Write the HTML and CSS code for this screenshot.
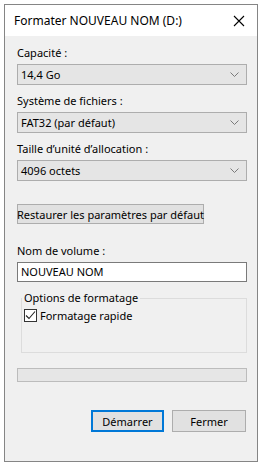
FILE: index.html
```html
<!DOCTYPE html>
<html lang="fr">

<head>
    <meta charset="UTF-8">
    <meta name="viewport" content="width=device-width, initial-scale=1.0">
    <title>Formater</title>
    <link rel="stylesheet" href="styles.css">
</head>

<body>
    <div class="window">
        <div class="titlebar">
            <span class="title">Formater NOUVEAU NOM (D:)</span>
            <svg class="close" width="12" height="12" viewBox="0 0 12 12">
                <path d="M1 1 L11 11 M11 1 L1 11" stroke="#000" stroke-width="1.1" fill="none" />
            </svg>
        </div>

        <div class="content">
            <div class="field first">
                <div class="label">Capacité :</div>
                <div class="combo"><span>14,4 Go</span><svg class="chev" width="9" height="5" viewBox="0 0 9 5"><path d="M0.5 0.5 L4.5 4.5 L8.5 0.5" stroke="#7a7a7a" fill="none" /></svg></div>
            </div>
            <div class="field">
                <div class="label">Système de fichiers :</div>
                <div class="combo"><span>FAT32 (par défaut)</span><svg class="chev" width="9" height="5" viewBox="0 0 9 5"><path d="M0.5 0.5 L4.5 4.5 L8.5 0.5" stroke="#7a7a7a" fill="none" /></svg></div>
            </div>
            <div class="field">
                <div class="label">Taille d’unité d’allocation :</div>
                <div class="combo"><span>4096 octets</span><svg class="chev" width="9" height="5" viewBox="0 0 9 5"><path d="M0.5 0.5 L4.5 4.5 L8.5 0.5" stroke="#7a7a7a" fill="none" /></svg></div>
            </div>

            <div class="btn restore">Restaurer les paramètres par défaut</div>

            <div class="field volume">
                <div class="label">Nom de volume :</div>
                <div class="textbox">NOUVEAU NOM</div>
            </div>

            <fieldset class="group">
                <legend>Options de formatage</legend>
                <label class="check">
                    <span class="box">
                        <svg width="11" height="11" viewBox="0 0 11 11"><path d="M1 5.5 L4 8.5 L10 1.5" stroke="#222" stroke-width="1.1" fill="none" /></svg>
                    </span>
                    Formatage rapide
                </label>
            </fieldset>

            <div class="progress"></div>

            <div class="actions">
                <div class="btn default">Démarrer</div>
                <div class="btn">Fermer</div>
            </div>
        </div>
    </div>
</body>

</html>
```

FILE: styles.css
```css
body {
    margin: 0;
    background-color: #ffffff;
    font-family: "Noto Sans", "Liberation Sans", sans-serif;
    font-size: 11px;
    color: #000;
}

.window {
    box-sizing: border-box;
    width: 254px;
    height: 458px;
    margin: 4px 0 0 4px;
    border: 1px solid #858585;
    display: flex;
    flex-direction: column;
}

.titlebar {
    height: 31px;
    background-color: #ffffff;
    display: flex;
    align-items: center;
    justify-content: space-between;
    padding: 0 9px 0 9px;
}

.title {
    font-size: 12px;
    margin-top: -1px;
}

.close {
    margin-right: 3px;
}

.content {
    flex: 1;
    background-color: #f0f0f0;
    padding: 0 10px 0 12px;
    display: flex;
    flex-direction: column;
}

.field {
    margin-top: 8px;
}

.field.first {
    margin-top: 9px;
}

.label {
    line-height: 16px;
    height: 16px;
    margin-bottom: 3px;
    white-space: nowrap;
}

.combo {
    box-sizing: border-box;
    height: 21px;
    width: 230px;
    background-color: #e5e5e5;
    border: 1px solid #adadad;
    display: flex;
    align-items: center;
    justify-content: space-between;
    padding: 0 7px 0 3px;
}

.btn {
    box-sizing: border-box;
    height: 20px;
    background-color: #e1e1e1;
    border: 1px solid #adadad;
    display: flex;
    align-items: center;
    justify-content: center;
    white-space: nowrap;
}

.restore {
    width: 187px;
    margin-top: 23px;
}

.volume {
    margin-top: 19px;
}

.textbox {
    box-sizing: border-box;
    height: 20px;
    width: 230px;
    background-color: #ffffff;
    border: 1px solid #7a7a7a;
    padding-left: 3px;
    line-height: 18px;
}

.group {
    box-sizing: border-box;
    width: 226px;
    height: 62px;
    margin: 9px 0 0 4px;
    padding: 0 0 0 2px;
    border: 1px solid #dcdcdc;
    border-radius: 0;
}

.group legend {
    padding: 0 2px;
    margin-left: -2px;
    line-height: 14px;
}

.check {
    display: flex;
    align-items: center;
    gap: 3px;
    margin-top: 3px;
}

.box {
    box-sizing: border-box;
    width: 13px;
    height: 13px;
    border: 1px solid #333;
    background-color: #ffffff;
    display: flex;
    align-items: center;
    justify-content: center;
}

.progress {
    box-sizing: border-box;
    width: 230px;
    height: 14px;
    margin-top: 15px;
    background-color: #e6e6e6;
    border: 1px solid #bcbcbc;
}

.actions {
    display: flex;
    justify-content: flex-end;
    gap: 8px;
    margin-top: 28px;
    padding-right: 1px;
}

.actions .btn {
    width: 74px;
    height: 22px;
}

.btn.default {
    width: 73px;
    border: 2px solid #0078d7;
}
```
